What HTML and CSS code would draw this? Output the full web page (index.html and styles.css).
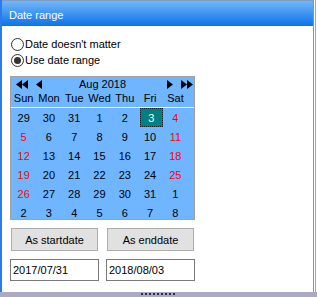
FILE: index.html
```html
<!DOCTYPE html>
<html>
<head>
  <title>Date range</title>
  <link rel="stylesheet" href="styles.css">
</head>
<body>
  <div class="window">
    <div class="panel">
      <div class="titlebar">Date range</div>
      <div class="content">
        <div class="options">
          <div class="option"><span class="radio"></span>Date doesn't matter</div>
          <div class="option"><span class="radio checked"></span>Use date range</div>
        </div>

        <div class="calendar">
          <div class="cal-head">
            <svg class="arrow wide" viewBox="0 0 12 9"><polygon points="6,0 6,9 0,4.5"/><polygon points="12,0 12,9 6,4.5"/></svg>
            <svg class="arrow single" viewBox="0 0 6 9"><polygon points="6,0 6,9 0,4.5"/></svg>
            <div class="month">Aug 2018</div>
            <svg class="arrow single" viewBox="0 0 6 9"><polygon points="0,0 0,9 6,4.5"/></svg>
            <svg class="arrow wide next" viewBox="0 0 12 9"><polygon points="0,0 0,9 6,4.5"/><polygon points="6,0 6,9 12,4.5"/></svg>
          </div>
          <div class="weekdays">
            <span>Sun</span><span>Mon</span><span>Tue</span><span>Wed</span><span>Thu</span><span>Fri</span><span>Sat</span>
          </div>
          <div class="days">
            <span>29</span><span>30</span><span>31</span><span>1</span><span>2</span><span class="sel">3</span><span class="we">4</span>
            <span class="we">5</span><span>6</span><span>7</span><span>8</span><span>9</span><span>10</span><span class="we">11</span>
            <span class="we">12</span><span>13</span><span>14</span><span>15</span><span>16</span><span>17</span><span class="we">18</span>
            <span class="we">19</span><span>20</span><span>21</span><span>22</span><span>23</span><span>24</span><span class="we">25</span>
            <span class="we">26</span><span>27</span><span>28</span><span>29</span><span>30</span><span>31</span><span>1</span>
            <span>2</span><span>3</span><span>4</span><span>5</span><span>6</span><span>7</span><span>8</span>
          </div>
        </div>

        <div class="buttons">
          <button class="btn">As startdate</button>
          <button class="btn">As enddate</button>
        </div>

        <div class="fields">
          <div class="field">2017/07/31</div>
          <div class="field">2018/08/03</div>
        </div>
      </div>
    </div>
    <div class="edge"></div>
  </div>
  <div class="grip"><div class="dots"></div></div>
</body>
</html>
```

FILE: styles.css
```css
body {
  margin: 0;
  width: 317px;
  height: 297px;
  overflow: hidden;
  background: #fff;
  font-family: "Liberation Sans", Arial, sans-serif;
  font-size: 11px;
  color: #000;
  display: flex;
  flex-direction: column;
}

.window {
  display: flex;
  height: 292px;
}

.panel {
  width: 314px;
  box-sizing: border-box;
  border-left: 2px solid #2a7de6;
  border-right: 1px solid #8f8fab;
  display: flex;
  flex-direction: column;
}

.edge {
  flex: 1;
  background: linear-gradient(to right, #fff 1px, #a4a4bc 1px, #a4a4bc 2px, #fff 2px);
}

.titlebar {
  height: 26px;
  box-sizing: border-box;
  border-top: 1px solid #7f9dc0;
  padding: 4px 0 0 7px;
  line-height: 21px;
  color: #fff;
  background: linear-gradient(to bottom, #72b6f9 0%, #3f95f1 50%, #0b73e8 100%);
}

.content {
  padding: 10px 0 0 8px;
}

.options {
  padding-left: 1px;
}

.option {
  display: flex;
  align-items: center;
  height: 16px;
  line-height: 16px;
}

.radio {
  width: 13px;
  height: 13px;
  box-sizing: border-box;
  border: 1px solid #333;
  border-radius: 50%;
  background: #fff;
  margin-right: 1px;
  display: flex;
  align-items: center;
  justify-content: center;
}

.radio.checked::after {
  content: "";
  width: 7px;
  height: 7px;
  border-radius: 50%;
  background: #333;
}

.calendar {
  margin-top: 8px;
  width: 185px;
  height: 144px;
  box-sizing: border-box;
  border: 1px solid #a0a0a0;
  background: #6fb5ff;
  overflow: hidden;
}

.cal-head {
  display: flex;
  align-items: center;
  height: 15px;
  padding: 0 1px 0 5px;
}

.arrow {
  height: 9px;
  fill: #000;
}

.arrow.wide {
  width: 12px;
}

.arrow.single {
  width: 6px;
}

.cal-head .arrow.single:nth-child(2) {
  margin-left: 8px;
}

.arrow.next {
  margin-left: 8px;
}

.month {
  flex: 1;
  text-align: center;
  line-height: 15px;
  padding-right: 4px;
}

.weekdays,
.days {
  display: grid;
  grid-template-columns: repeat(7, 1fr);
  width: 177px;
  text-align: center;
}

.weekdays {
  line-height: 13px;
  padding-bottom: 2px;
  border-bottom: 1px solid #fff;
  width: 183px;
  grid-template-columns: repeat(7, 25.3px);
}

.days span {
  height: 19px;
  line-height: 20px;
}

.days .we {
  color: #f00;
}

.days .sel {
  justify-self: end;
  width: 23px;
  box-sizing: border-box;
  border: 1px dotted #1a1a1a;
  line-height: 18px;
  background: #008080;
  color: #fff;
}

.buttons {
  display: flex;
  gap: 9px;
  margin: 8px 0 0 1px;
}

.btn {
  width: 87px;
  height: 23px;
  padding: 0;
  border: 1px solid #adadad;
  background: #e1e1e1;
  font-family: inherit;
  font-size: 11px;
  color: #000;
}

.fields {
  display: flex;
  gap: 7px;
  margin-top: 8px;
}

.field {
  width: 89px;
  height: 22px;
  box-sizing: border-box;
  border: 1px solid #7a7a7a;
  padding: 0 2px;
  line-height: 20px;
  background: #fff;
}

.grip {
  height: 5px;
  background: #aaaac6;
}

.dots {
  width: 36px;
  height: 2px;
  margin: 1px auto 0;
  background: repeating-linear-gradient(to right, #2e2e48 0 2px, transparent 2px 4px);
}
```
